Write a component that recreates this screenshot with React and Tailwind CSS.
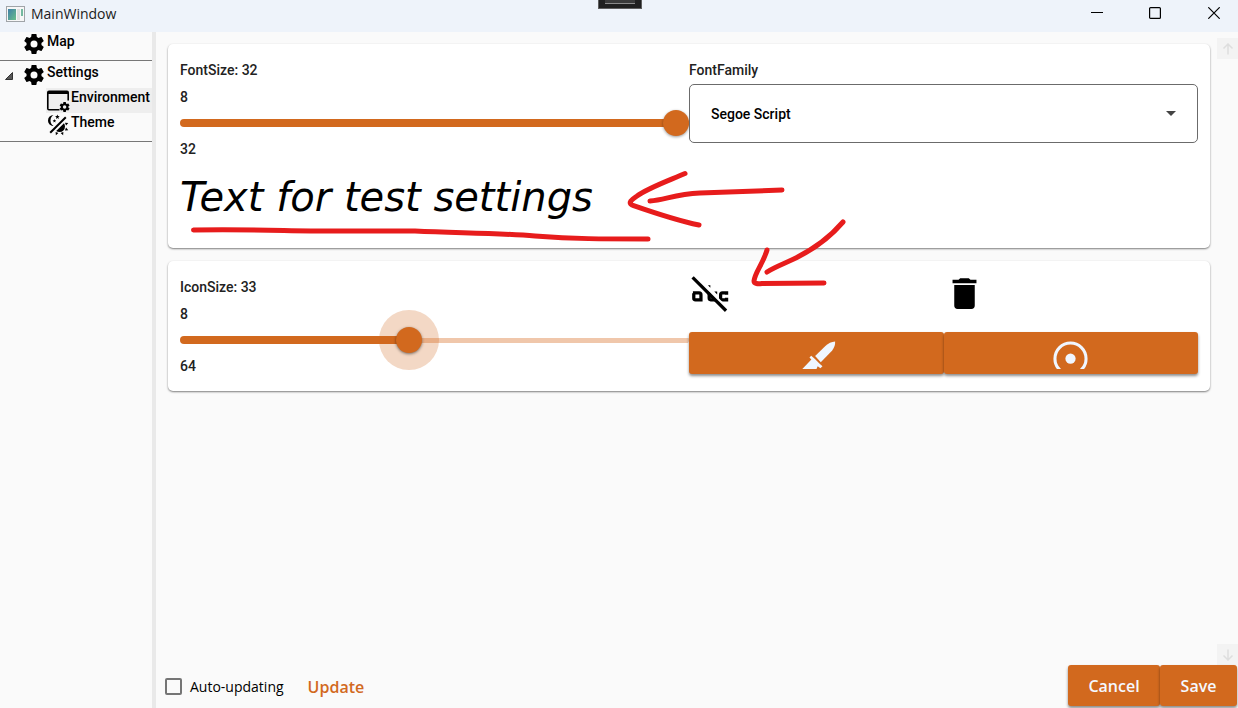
import { useState } from "react";

const COG =
  "M12,15.5A3.5,3.5 0 0,1 8.5,12A3.5,3.5 0 0,1 12,8.5A3.5,3.5 0 0,1 15.5,12A3.5,3.5 0 0,1 12,15.5M19.43,12.97C19.47,12.65 19.5,12.33 19.5,12C19.5,11.67 19.47,11.34 19.43,11L21.54,9.37C21.73,9.22 21.78,8.95 21.66,8.73L19.66,5.27C19.54,5.05 19.27,4.96 19.05,5.05L16.56,6.05C16.04,5.66 15.5,5.32 14.87,5.07L14.5,2.42C14.46,2.18 14.25,2 14,2H10C9.75,2 9.54,2.18 9.5,2.42L9.13,5.07C8.5,5.32 7.96,5.66 7.44,6.05L4.95,5.05C4.73,4.96 4.46,5.05 4.34,5.27L2.34,8.73C2.21,8.95 2.27,9.22 2.46,9.37L4.57,11C4.53,11.34 4.5,11.67 4.5,12C4.5,12.33 4.53,12.65 4.57,12.97L2.46,14.63C2.27,14.78 2.21,15.05 2.34,15.27L4.34,18.73C4.46,18.95 4.73,19.03 4.95,18.95L7.44,17.94C7.96,18.34 8.5,18.68 9.13,18.93L9.5,21.58C9.54,21.82 9.75,22 10,22H14C14.25,22 14.46,21.82 14.5,21.58L14.87,18.93C15.5,18.67 16.04,18.34 16.56,17.94L19.05,18.95C19.27,19.03 19.54,18.95 19.66,18.73L21.66,15.27C21.78,15.05 21.73,14.78 21.54,14.63L19.43,12.97Z";

const THEME =
  "M7.5,2C5.71,3.15 4.5,5.18 4.5,7.5C4.5,9.82 5.71,11.85 7.53,13C4.46,13 2,10.54 2,7.5A5.5,5.5 0 0,1 7.5,2M19.07,3.5L20.5,4.93L4.93,20.5L3.5,19.07L19.07,3.5M12.89,5.93L11.41,5L9.97,6L10.39,4.3L9,3.24L10.75,3.12L11.33,1.47L12,3.1L13.73,3.13L12.38,4.26L12.89,5.93M9.59,9.54L8.43,8.81L7.31,9.59L7.65,8.27L6.56,7.44L7.92,7.35L8.37,6.06L8.88,7.33L10.24,7.36L9.19,8.23L9.59,9.54M19,13.5A5.5,5.5 0 0,1 13.5,19C12.28,19 11.15,18.6 10.24,17.93L17.93,10.24C18.6,11.15 19,12.28 19,13.5M14.6,20.08L17.37,18.93L17.13,22.28L14.6,20.08M18.93,17.38L20.08,14.61L22.28,17.15L18.93,17.38M20.08,12.42L18.94,9.64L22.28,9.88L20.08,12.42M9.63,18.93L12.4,20.08L9.87,22.27L9.63,18.93Z";

function PathIcon({ d, className }) {
  return (
    <svg viewBox="0 0 24 24" className={className} fill="currentColor" aria-hidden="true">
      <path d={d} />
    </svg>
  );
}

function WindowCogIcon() {
  return (
    <svg viewBox="0 0 24 24" className="mr-px size-6 shrink-0" fill="currentColor" aria-hidden="true">
      <path d="M3 2.5H21A2 2 0 0 1 23 4.500V12.500H21.400V6H2.600V21H13.500V22.500H3A2 2 0 0 1 1 20.500V4.500A2 2 0 0 1 3 2.500Z" />
      <g transform="translate(12.6 13) scale(0.5)">
        <path d={COG} />
      </g>
    </svg>
  );
}

function AbcOffIcon() {
  return (
    <svg viewBox="0 0 24 24" className="size-[41px]" aria-hidden="true">
      <g fill="none" stroke="black" strokeWidth="1.9">
        <path d="M2.300 11.600H5.900Q7 11.600 7 12.700V15.700H3.800Q2.800 15.700 2.800 14.800V11.900" />
        <path d="M11.800 10.900V14.700Q11.800 15.700 12.700 15.700H15.200" />
        <path d="M22 12.700V11.600H19.600Q18.500 11.600 18.500 12.700V14.700Q18.500 15.700 19.600 15.700H22V14.500" />
      </g>
      <path d="M11.100 7.200H12.500V8.700ZM14.800 10.900H16.500V12.600Z" fill="black" />
      <path d="M3.600 2.200L22.800 21" stroke="white" strokeWidth="1.300" />
      <path d="M2.100 2.600L21.700 22.100" stroke="black" strokeWidth="1.900" />
    </svg>
  );
}

function KnifeIcon() {
  return (
    <svg viewBox="0 0 24 18" className="h-[31px] w-[41px]" fill="#f0f6ff" aria-hidden="true">
      <path d="M11.2 10.4L17.2 4.6Q19.7 2.3 22.9 2Q23.1 4.7 21.2 7.2L14.5 14.1Z" />
      <path d="M8.9 10.3L11.1 12.2L13.7 14.8L15.5 16.5L14.3 17.6L12.7 16.4L12 18H3.7L9 12.5L7.9 11.3Z" />
    </svg>
  );
}

function RadiusIcon() {
  return (
    <svg viewBox="0 0 24 18" className="h-[31px] w-[41px]" aria-hidden="true">
      <circle cx="12" cy="12" r="9.1" fill="none" stroke="#f0f6ff" strokeWidth="1.8" />
      <circle cx="12" cy="12" r="3" fill="#f0f6ff" />
    </svg>
  );
}

const SLIDER =
  "block h-[26px] w-full cursor-pointer appearance-none bg-transparent outline-none [&::-webkit-slider-runnable-track]:h-2 [&::-webkit-slider-runnable-track]:rounded-full [&::-webkit-slider-runnable-track]:bg-(image:--track) [&::-webkit-slider-runnable-track]:bg-no-repeat [&::-webkit-slider-runnable-track]:bg-(length:--fill) [&::-webkit-slider-runnable-track]:bg-left [&::-webkit-slider-thumb]:-mt-[9px] [&::-webkit-slider-thumb]:size-[26px] [&::-webkit-slider-thumb]:appearance-none [&::-webkit-slider-thumb]:rounded-full [&::-webkit-slider-thumb]:bg-[#d2691e]";

function Slider({ id, label, min, max, value, onChange, halo }) {
  const percent = ((value - min) / (max - min)) * 100;
  return (
    <div className="min-w-0">
      <label htmlFor={id} className="block h-7 leading-7">
        {label}: {value}
      </label>
      <div className="h-[26px] leading-[26px]">{min}</div>
      <input
        id={id}
        type="range"
        min={min}
        max={max}
        value={value}
        onChange={(e) => onChange(Number(e.target.value))}
        className={
          SLIDER +
          (halo
            ? " [&::-webkit-slider-thumb]:shadow-[0_1px_3px_rgba(0,0,0,0.5),0_0_0_17px_rgba(210,105,30,0.26)]"
            : " [&::-webkit-slider-thumb]:shadow-[0_1px_3px_rgba(0,0,0,0.4)]")
        }
        style={{
          "--track":
            "linear-gradient(#d2691e,#d2691e), linear-gradient(#f0c7ab,#f0c7ab)",
          "--fill": `${percent}% 100%, 100% 5px`,
        }}
      />
      <div className="h-[26px] leading-[26px]">{max}</div>
    </div>
  );
}

function Card({ children }) {
  return (
    <section className="rounded-[5px] bg-white p-3 shadow-[0_1px_2px_rgba(0,0,0,0.5)]">
      {children}
    </section>
  );
}

function TitleBar() {
  return (
    <header className="relative flex h-8 shrink-0 items-start justify-between bg-[#eef3fa]">
      <div className="flex h-[27px] items-center gap-[6px] pl-[6px]">
        <svg viewBox="0 0 19 16" className="h-4 w-[19px]" aria-hidden="true">
          <defs>
            <linearGradient id="app" x1="0" y1="0" x2="1" y2="1">
              <stop offset="0" stopColor="#3f7fa8" />
              <stop offset="1" stopColor="#6cc08b" />
            </linearGradient>
          </defs>
          <rect x="0.5" y="0.5" width="18" height="15" fill="#f7f7f7" stroke="#a0a4a8" />
          <rect x="2" y="3" width="8" height="11" fill="url(#app)" />
          <rect x="11" y="3" width="3" height="11" fill="#e0e0e0" />
          <rect x="15" y="3" width="2" height="7" fill="#74b9a0" />
        </svg>
        <h1 className="font-['Open_Sans','Noto_Sans',sans-serif] text-sm leading-6 text-[#1b1b1b]">
          MainWindow
        </h1>
      </div>
      <div className="absolute left-1/2 h-[9px] w-11 -translate-x-[21px] border border-t-0 border-[#5f5f5f] bg-[#202020] px-[6px]">
        <div className="h-1 border-b border-[#8a8a8a] bg-[#3a3a3a]" />
      </div>
      <div className="flex gap-3">
        <button aria-label="Minimize" className="flex h-[26px] w-[46px] items-center justify-center">
          <svg viewBox="0 0 12 12" className="size-3" stroke="black">
            <path d="M0 5.5H12" />
          </svg>
        </button>
        <button aria-label="Maximize" className="flex h-[26px] w-[46px] items-center justify-center">
          <svg viewBox="0 0 12 12" className="size-3" fill="none" stroke="black" strokeWidth="1.2">
            <rect x="0.6" y="0.6" width="10.8" height="10.8" rx="1" />
          </svg>
        </button>
        <button aria-label="Close" className="flex h-[26px] w-[48px] items-center justify-center">
          <svg viewBox="0 0 12 12" className="size-3" stroke="black" strokeWidth="1.2">
            <path d="M0.3 0.3L11.7 11.7M11.7 0.3L0.3 11.7" />
          </svg>
        </button>
      </div>
    </header>
  );
}

function NavItem({ icon, children, active }) {
  return (
    <a
      href="#"
      aria-current={active ? "page" : undefined}
      className={"flex h-[25px] items-start whitespace-nowrap leading-[18px] " + (active ? "bg-[#eeeeee]" : "")}
    >
      {icon}
      <span>{children}</span>
    </a>
  );
}

function Sidebar() {
  return (
    <nav className="w-[156px] shrink-0 border-r-4 border-[#e9e9e9] text-sm font-medium text-black">
      <div className="border-b border-[#777777] pb-[3px] pl-[22px]">
        <NavItem icon={<PathIcon d={COG} className="mr-px size-6 shrink-0" />}>Map</NavItem>
      </div>
      <div className="border-b border-[#777777] pt-[2px] pb-[3px]">
        <div className="flex">
          <button aria-label="Collapse Settings" className="flex w-[22px] items-center pl-[5px]">
            <svg viewBox="0 0 8 8" className="size-2">
              <path d="M7.5 0.5V7.5H0.5Z" fill="#595959" stroke="#333333" />
            </svg>
          </button>
          <NavItem icon={<PathIcon d={COG} className="mr-px size-6 shrink-0" />}>Settings</NavItem>
        </div>
        <div className="pl-[46px]">
          <NavItem active icon={<WindowCogIcon />}>
            Environment
          </NavItem>
          <NavItem icon={<PathIcon d={THEME} className="mr-px size-6 shrink-0" />}>Theme</NavItem>
        </div>
      </div>
    </nav>
  );
}

function ScrollButton({ label, d }) {
  return (
    <button aria-label={label} className="flex size-[21px] items-center justify-center bg-[#f3f3f3]">
      <svg viewBox="0 0 12 12" className="size-3" fill="none" stroke="#dedede" strokeWidth="1.5">
        <path d={d} />
      </svg>
    </button>
  );
}

/* Pen strokes drawn over the cards, placed relative to the content area. */
function PenMarks() {
  return (
    <svg
      viewBox="156 32 700 270"
      className="pointer-events-none absolute top-0 left-0 h-[270px] w-[700px]"
      fill="none"
      stroke="#e71c1c"
      strokeWidth="5"
      strokeLinecap="round"
      strokeLinejoin="round"
      aria-hidden="true"
    >
      <path d="M193.500 230C250 229 290 231 330 231H415C460 233 500 233 535 236C575 239 600 239 648 239" />
      <path d="M685 173.500C665 182 648 188 637 196C631 200 628 203 632 205C655 213 675 220 699 225" />
      <path d="M650 201C665 200 675 194 700 193C730 192 760 191 782 190" />
      <path d="M843 222C825 243 804 255 785 263C776 267 770 270 767 272" />
      <path d="M767 250C763 264 755 272 754 281C754 284 758 284 762 283.500L824 283" />
    </svg>
  );
}

const FILLED =
  "flex items-center justify-center rounded-[3px] bg-[#d2691e] shadow-[0_2px_3px_rgba(0,0,0,0.45)]";

export default function App() {
  const [fontSize, setFontSize] = useState(32);
  const [iconSize, setIconSize] = useState(33);

  return (
    <div className="flex min-h-screen flex-col bg-[#fafafa] font-['Roboto','Liberation_Sans',sans-serif]">
      <TitleBar />
      <div className="flex flex-1">
        <Sidebar />
        <div className="relative flex min-w-0 flex-1 flex-col">
          <div className="flex flex-1">
            <main className="flex min-w-0 flex-1 flex-col gap-[13px] pt-3 pr-[7px] pl-3 text-sm font-medium text-[#222222]">
              <Card>
                <div className="grid grid-cols-2">
                  <Slider id="font-size" label="FontSize" min={8} max={32} value={fontSize} onChange={setFontSize} />
                  <div className="min-w-0">
                    <label htmlFor="font-family" className="block h-7 leading-7">
                      FontFamily
                    </label>
                    <div className="relative">
                      <select
                        id="font-family"
                        className="h-[59px] w-full appearance-none rounded-[5px] border border-[#6b6b6b] bg-white px-[21px] text-black"
                      >
                        <option>Segoe Script</option>
                      </select>
                      <svg viewBox="0 0 10 5" className="pointer-events-none absolute top-[27px] right-[22px] h-[5px] w-[10px]">
                        <path d="M0 0H10L5 5Z" fill="#444444" />
                      </svg>
                    </div>
                  </div>
                </div>
                <p className="h-[74px] font-['Segoe_Script','DejaVu_Sans',cursive] text-[40px] leading-[70px] font-normal whitespace-nowrap text-black italic">
                  Text for test settings
                </p>
              </Card>
              <Card>
                <div className="grid grid-cols-2">
                  <Slider id="icon-size" label="IconSize" min={8} max={64} value={iconSize} onChange={setIconSize} halo />
                  <div className="grid grid-cols-2 content-start gap-y-[18px] pb-px">
                    <AbcOffIcon />
                    <svg viewBox="0 0 24 24" className="size-[41px]" aria-hidden="true">
                      <path d="M19,4H15.5L14.5,3H9.500L8.500,4H5V6H19M6,19A2,2 0 0,0 8,21H16A2,2 0 0,0 18,19V7H6V19Z" />
                    </svg>
                    <button aria-label="Knife" className={FILLED + " h-[42px]"}>
                      <KnifeIcon />
                    </button>
                    <button aria-label="Radius" className={FILLED + " h-[42px]"}>
                      <RadiusIcon />
                    </button>
                  </div>
                </div>
              </Card>
            </main>
            <div className="flex flex-col justify-between pt-[6px]">
              <ScrollButton label="Scroll up" d="M6 11.5V1M1.500 5.500L6 1L10.500 5.500" />
              <ScrollButton label="Scroll down" d="M6 0.500V11M1.500 6.500L6 11L10.500 6.500" />
            </div>
          </div>
          <footer className="flex h-[43px] shrink-0 items-start justify-between pr-px pl-[9px] font-['Open_Sans','Noto_Sans',sans-serif]">
            <div className="flex h-[43px] items-center gap-6">
              <label className="flex items-center gap-2 text-sm text-black">
                <input
                  type="checkbox"
                  className="size-[17px] appearance-none rounded-[2px] border-2 border-[#757575] checked:bg-[#d2691e]"
                />
                Auto-updating
              </label>
              <button className="text-base font-semibold text-[#d2691e]">Update</button>
            </div>
            <div className="flex text-base font-semibold text-[#f5f8ff]">
              <button className={FILLED + " h-[41px] w-[92px]"}>Cancel</button>
              <button className={FILLED + " h-[41px] w-[77px]"}>Save</button>
            </div>
          </footer>
          <PenMarks />
        </div>
      </div>
    </div>
  );
}
